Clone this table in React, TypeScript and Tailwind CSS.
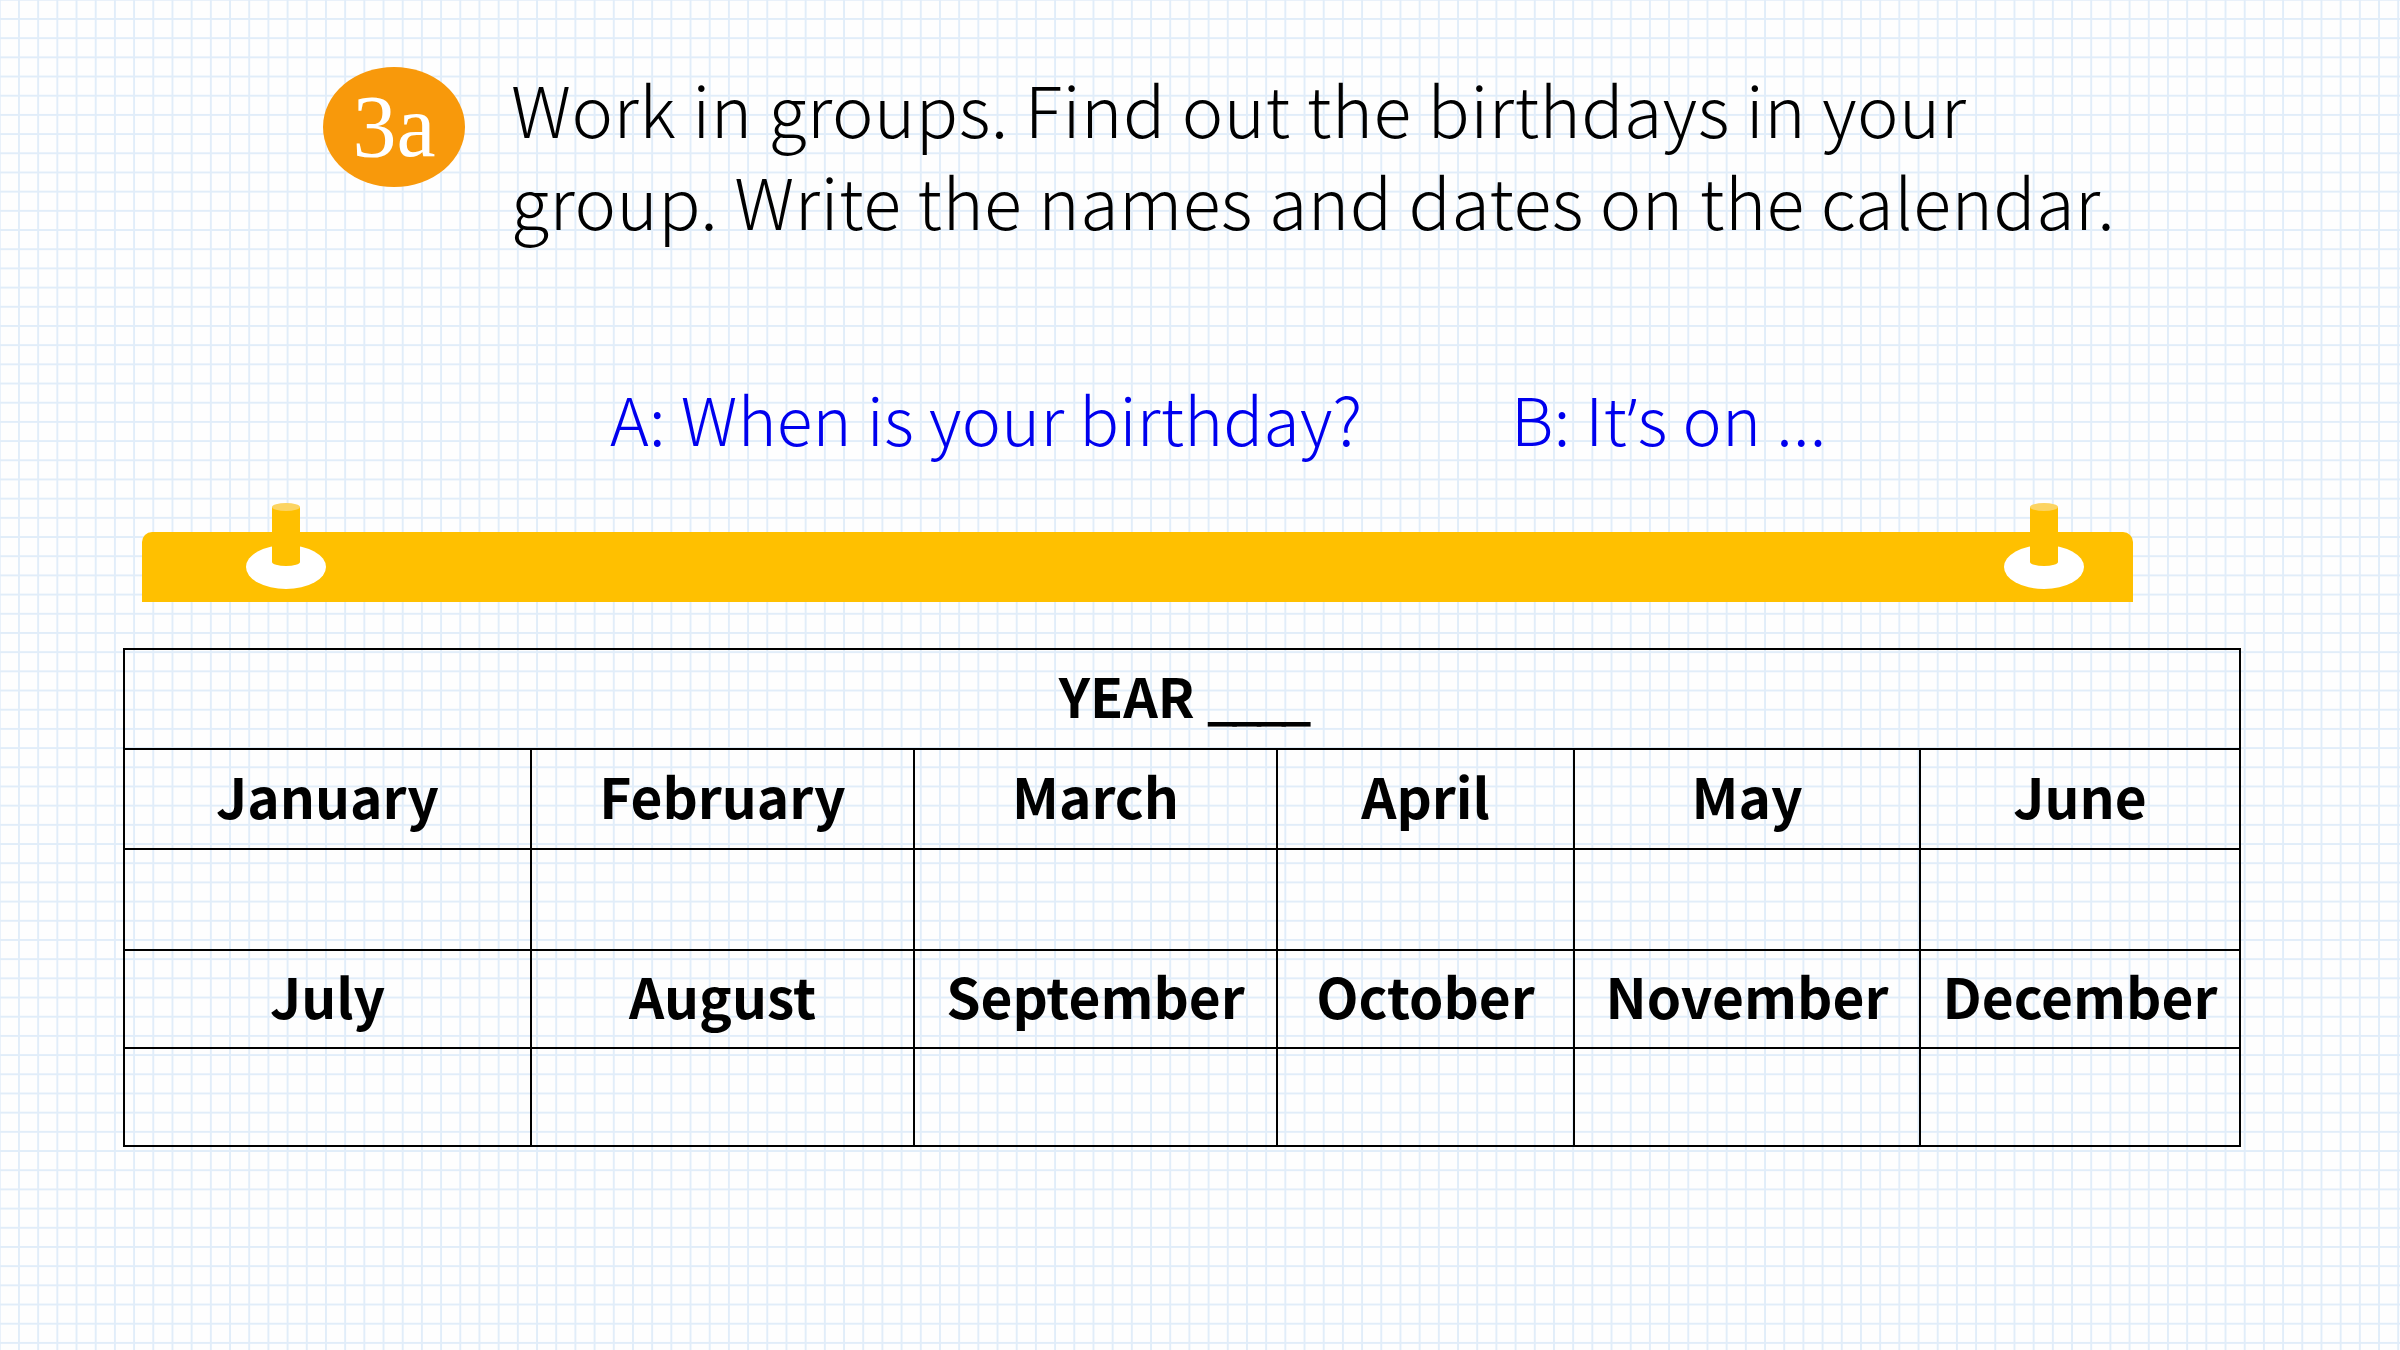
import * as React from "react";

const months1 = ["January", "February", "March", "April", "May", "June"];
const months2 = ["July", "August", "September", "October", "November", "December"];
const colWidths = [407, 383, 363, 297, 346, 320];

function Peg({ className }: { className: string }) {
  return (
    <svg
      className={className}
      width="80"
      height="88"
      viewBox="0 0 80 88"
    >
      <ellipse cx="40" cy="64" rx="40" ry="22" fill="#ffffff" />
      <path d="M26 4 L54 4 L54 59 A14 4 0 0 1 26 59 Z" fill="#ffc000" />
      <ellipse cx="40" cy="4" rx="14" ry="4" fill="#fcd462" />
    </svg>
  );
}

export default function App() {
  return (
    <div className="relative h-[1350px] w-[2400px] overflow-hidden bg-[#fefefe] bg-[linear-gradient(to_right,#e1edf9_2px,transparent_2px),linear-gradient(to_bottom,#e1edf9_2px,transparent_2px)] bg-[size:19.2px_19.2px] bg-[position:18px_18px]">
      {/* title */}
      <div className="flex items-start pl-[323px] pt-[67px]">
        <div className="flex h-[120px] w-[142px] shrink-0 items-center justify-center rounded-[50%] bg-[#f8990b]">
          <span className="font-['Liberation_Serif',serif] text-[88px] leading-none text-white">
            3a
          </span>
        </div>
        <div className="ml-[46px] mt-[-5px] font-['Noto_Sans_CJK_SC',sans-serif] text-[70px] font-light leading-[92px] tracking-[0.5px] text-black">
          <div>Work in groups. Find out the birthdays in your</div>
          <div>group. Write the names and dates on the calendar.</div>
        </div>
      </div>

      {/* dialogue */}
      <div className="mt-[131px] flex pl-[610px] font-['Noto_Sans_CJK_SC',sans-serif] text-[66px] font-light leading-[80px] tracking-[0.3px] text-[#0000ee]">
        <span className="w-[901px]">A: When is your birthday?</span>
        <span>
          B: It<span className="font-['Noto_Sans',sans-serif]">’</span>s on ...
        </span>
      </div>

      {/* calendar bar */}
      <div className="relative ml-[142px] mt-[72px] h-[70px] w-[1991px] rounded-t-[10px] bg-[#ffc000]">
        <Peg className="absolute left-[104px] top-[-29px]" />
        <Peg className="absolute left-[1862px] top-[-29px]" />
      </div>

      {/* calendar table */}
      <table className="ml-[123px] mt-[46px] w-[2116px] table-fixed border-collapse border-2 border-black font-['Noto_Sans_CJK_SC',sans-serif] font-bold text-black">
        <colgroup>
          {colWidths.map((w, i) => (
            <col key={i} style={{ width: w }} />
          ))}
        </colgroup>
        <tbody>
          <tr className="h-[100px]">
            <td colSpan={6} className="border-2 border-black pb-[8px] text-center text-[54px] leading-none">
              YEAR <span className="tracking-[-6px]">____</span>
            </td>
          </tr>
          <tr className="h-[100px]">
            {months1.map((m) => (
              <td key={m} className="border-2 border-black pb-[8px] text-center text-[55px] leading-none">
                {m}
              </td>
            ))}
          </tr>
          <tr className="h-[101px]">
            {months1.map((m) => (
              <td key={m} className="border-2 border-black" />
            ))}
          </tr>
          <tr className="h-[98px]">
            {months2.map((m) => (
              <td key={m} className="border-2 border-black pb-[8px] text-center text-[55px] leading-none">
                {m}
              </td>
            ))}
          </tr>
          <tr className="h-[98px]">
            {months2.map((m) => (
              <td key={m} className="border-2 border-black" />
            ))}
          </tr>
        </tbody>
      </table>
    </div>
  );
}
